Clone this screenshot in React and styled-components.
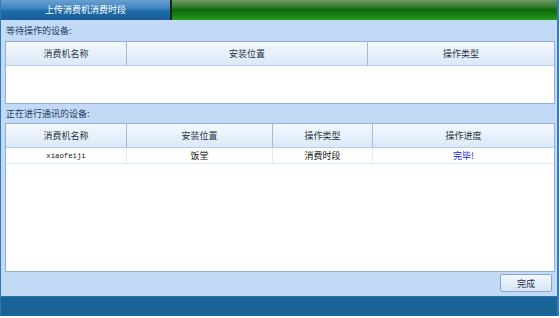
import React from "react";
import styled, { createGlobalStyle } from "styled-components";

const Global = createGlobalStyle`
  html, body { margin: 0; padding: 0; background: #ffffff; overflow: hidden; }
  body { font-family: "Noto Sans CJK SC", "DejaVu Sans", sans-serif; }
  * { box-sizing: border-box; }
`;

const Window = styled.div`
  width: 559px;
  height: 316px;
  display: flex;
  flex-direction: column;
  border-left: 1px solid #2f78b4;
  border-right: 2px solid #2a80c4;
  background: #c3daf6;
`;

const TabBar = styled.div`
  height: 20px;
  display: flex;
  background: linear-gradient(#6a9a62 0%, #3e7e36 30%, #0c6a0a 50%, #1a8614 80%, #2a9a20 100%);
`;

const Tab = styled.div`
  width: 171px;
  border-right: 2px solid #14261a;
  background: linear-gradient(#6aa0d0 0%, #3a80bc 45%, #1c6aa6 55%, #1a5e98 100%);
  color: #ffffff;
  font-size: 9px;
  line-height: 20px;
  text-align: center;
`;

const Body = styled.div`
  flex: 1;
  display: flex;
  flex-direction: column;
  padding: 0 2px 0 4px;
`;

const Label = styled.div`
  height: ${({ $h }) => $h}px;
  line-height: ${({ $h }) => $h + 1}px;
  font-size: 9px;
  color: #1c3a64;
  padding-left: 1px;
`;

const Grid = styled.div`
  border: 1px solid #93b0d4;
  background: #ffffff;
  height: ${({ $h }) => $h}px;
  display: flex;
  flex-direction: column;
`;

const Head = styled.div`
  display: grid;
  grid-template-columns: ${({ $cols }) => $cols};
  height: 24px;
  background: linear-gradient(#f4f8fe, #dce8f8);
  border-bottom: 1px solid #b8cde8;
`;

const HeadCell = styled.div`
  font-size: 9px;
  color: #2a3444;
  line-height: 23px;
  text-align: center;
  border-left: 1px solid #a2bcdc;
  &:first-child { border-left: none; }
`;

const Row = styled.div`
  display: grid;
  grid-template-columns: ${({ $cols }) => $cols};
  height: 16px;
  border-bottom: 1px solid #dce8f6;
`;

const Cell = styled.div`
  font-size: ${({ $mono }) => ($mono ? "7.3px" : "9px")};
  font-family: ${({ $mono }) =>
    $mono ? '"Liberation Mono", monospace' : '"Noto Sans CJK SC", sans-serif'};
  color: ${({ $blue }) => ($blue ? "#2020e8" : "#111111")};
  line-height: 16px;
  text-align: center;
  border-left: 1px solid #e2ecf8;
  &:first-child { border-left: none; }
`;

const Footer = styled.div`
  display: flex;
  justify-content: flex-end;
  padding: 2px 3px 0 0;
  height: 24px;
`;

const Button = styled.button`
  width: 52px;
  height: 18px;
  padding: 0;
  border: 1px solid #8ca6c8;
  border-radius: 2px;
  background: linear-gradient(#f4f8fe, #d6e4f6);
  font-family: "Noto Sans CJK SC", sans-serif;
  font-size: 9px;
  color: #1c2c44;
`;

const StatusBar = styled.div`
  height: 20px;
  background: #196396;
  border-top: 1px solid #2c78ae;
`;

const cols1 = "120px 241px 1fr";
const cols2 = "120px 146px 100px 1fr";

export default function App() {
  return (
    <>
      <Global />
      <Window>
        <TabBar>
          <Tab>上传消费机消费时段</Tab>
        </TabBar>
        <Body>
          <Label $h={21}>等待操作的设备:</Label>
          <Grid $h={63}>
            <Head $cols={cols1}>
              <HeadCell>消费机名称</HeadCell>
              <HeadCell>安装位置</HeadCell>
              <HeadCell>操作类型</HeadCell>
            </Head>
          </Grid>
          <Label $h={19}>正在进行通讯的设备:</Label>
          <Grid $h={149}>
            <Head $cols={cols2}>
              <HeadCell>消费机名称</HeadCell>
              <HeadCell>安装位置</HeadCell>
              <HeadCell>操作类型</HeadCell>
              <HeadCell>操作进度</HeadCell>
            </Head>
            <Row $cols={cols2}>
              <Cell $mono>xiaofeiji</Cell>
              <Cell>饭堂</Cell>
              <Cell>消费时段</Cell>
              <Cell $blue>完毕!</Cell>
            </Row>
          </Grid>
          <Footer>
            <Button>完成</Button>
          </Footer>
        </Body>
        <StatusBar />
      </Window>
    </>
  );
}
